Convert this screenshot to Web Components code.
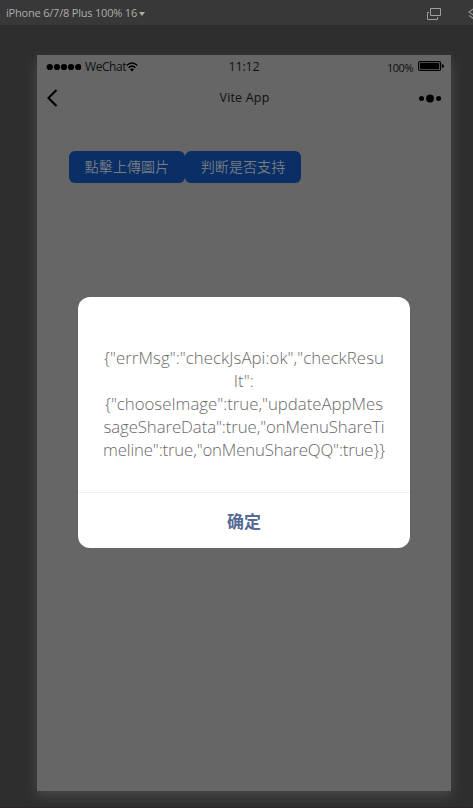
<!DOCTYPE html>
<html lang="zh"><head><meta charset="utf-8"><title>Vite App</title>
<style>html,body{margin:0;height:100%;overflow:hidden;background:#2e2e2e}body{font-family:"Open Sans","Noto Sans CJK SC",sans-serif}</style></head>
<body>
<sim-window>
<sim-toolbar slot="bar"><fit-text w="131">iPhone 6/7/8 Plus 100% 16</fit-text></sim-toolbar>
<phone-screen>
<status-bar></status-bar>
<nav-bar><fit-text w="50">Vite App</fit-text></nav-bar>
<button-row><app-button>點擊上傳圖片</app-button><app-button>判断是否支持</app-button></button-row>
</phone-screen>
<alert-dialog slot="overlay">
<fit-text w="280">{"errMsg":"checkJsApi:ok","checkResu</fit-text>
<fit-text w="20">lt":</fit-text>
<fit-text w="278">{"chooseImage":true,"updateAppMes</fit-text>
<fit-text w="281">sageShareData":true,"onMenuShareTi</fit-text>
<fit-text w="282">meline":true,"onMenuShareQQ":true}}</fit-text>
<span slot="action">确定</span>
</alert-dialog>
</sim-window>
<script>
const make=(name,html,ready)=>customElements.define(name,class extends HTMLElement{
  constructor(){super();this.attachShadow({mode:'open'}).innerHTML=html}
  connectedCallback(){if(ready)ready(this)}
});
make('sim-window',`<style>:host{display:flex;flex-direction:column;position:relative;height:808px;width:473px;box-sizing:border-box;border-bottom:1px solid #2d2529;background:#2e2e2e;overflow:hidden}</style><slot name="bar"></slot><slot></slot><slot name="overlay"></slot>`);
make('sim-toolbar',`<style>:host{display:flex;align-items:center;flex:none;height:25px;background:#383838;color:#adadad;font-size:11px;padding:1px 0 0 6px;box-sizing:border-box;position:relative;z-index:1}
fit-text,slot{display:block}slot{margin-top:-1px}.a{margin-left:2px;margin-top:1px}.b{margin-left:282px;margin-top:2px}.c{margin-left:27px;margin-top:2px;flex:none}svg{flex:none}</style>
<slot></slot><svg class="a" width="6" height="4"><path d="M0 0H6L3 4Z" fill="#adadad"/></svg>
<svg class="b" width="14" height="12" viewBox="0 0 14 12" fill="none" stroke="#9e9e9e"><path d="M3.500.5h10v7h-10zM2 4.500H.5v7h10V9"/></svg>
<svg class="c" width="14" height="14" viewBox="0 0 14 14" fill="none" stroke="#8f8f8f" stroke-width="1.300"><path d="M7 1 1 5l6 4 6-4zM1 8.500l6 4 6-4"/></svg>`);
make('phone-screen',`<style>:host{display:block;flex:none;width:414px;height:736px;margin:30px 0 0 37px;background:#666;box-shadow:0 5px 12px 0 #4b4b4b}</style><slot></slot>`);
make('status-bar',`<style>:host{display:grid;grid-template-columns:1fr auto 1fr;align-items:center;height:22px;margin-bottom:1px;padding:0 7px 0 9px;font-size:12px;color:#111}
.l,.r{display:flex;align-items:center}.r{justify-content:flex-end;font-size:11px}.l svg:first-child{margin-right:4px}.r svg{margin-left:5px}.l,.r{height:22px}.l svg{margin-top:1px}.r fit-text{margin-top:2px}.t{font-size:12.500px;margin-left:-2px}</style>
<div class="l"><svg width="35" height="8" fill="#000"><circle cx="3.800" cy="4" r="3.100"/><circle cx="10.900" cy="4" r="3.100"/><circle cx="18" cy="4" r="3.100"/><circle cx="25.100" cy="4" r="3.100"/><circle cx="32.200" cy="4" r="3.100"/></svg><fit-text w="41">WeChat</fit-text><svg width="12" height="10" viewBox="0 0 12 10" fill="none" stroke="#000" stroke-width="1.500"><path d="M.7 3.500Q6-1.500 11.300 3.500M2.700 5.700Q6 2.500 9.300 5.700"/><path d="M4 7.300Q6 5.500 8 7.300L6 9.500Z" fill="#000" stroke="none"/></svg></div>
<fit-text class="t" w="31">11:12</fit-text>
<div class="r"><fit-text w="26">100%</fit-text><svg width="26" height="10" viewBox="0 0 26 10"><rect x=".6" y=".6" width="22" height="8.800" rx="1.500" fill="none" stroke="#000" stroke-width="1.200"/><rect x="2" y="2" width="19.200" height="6" rx=".7"/><path d="M24 3Q26 3.500 26 5T24 7Z"/></svg></div>`);
make('nav-bar',`<style>:host{display:grid;grid-template-columns:1fr auto 1fr;align-items:center;height:40px;padding:0 9px 0 10px;font-size:12.500px;color:#111}
.m{justify-self:end}slot{display:block;margin-top:-1px}</style><svg width="11" height="18" fill="none" stroke="#000" stroke-width="2.100"><path d="M9.500 1 1.400 9l8.100 8"/></svg><slot></slot><svg class="m" width="24" height="10"><circle cx="3.500" cy="5.500" r="2.500"/><circle cx="12" cy="5.500" r="3.900"/><circle cx="20.600" cy="5.500" r="2.500"/></svg>`);
make('button-row',`<style>:host{display:flex;padding:33px 0 0 32px}</style><slot></slot>`);
make('app-button',`<style>:host{display:flex;align-items:center;justify-content:center;width:116px;height:32px;box-sizing:border-box;padding-bottom:2px;border-radius:6px;background:#092f66;color:#7a7d82;font:350 14px "Noto Sans CJK SC",sans-serif;box-shadow:0 2px 0 #636466;letter-spacing:.1px}</style><slot></slot>`);
make('alert-dialog',`<style>:host{display:flex;flex-direction:column;position:absolute;left:78px;top:297.400px;width:332px;height:251px;box-sizing:border-box;border-radius:12px;background:#fff;overflow:hidden}
.body{height:195px;flex:none;box-sizing:border-box;padding-top:49px;display:flex;flex-direction:column;align-items:center;font-size:16.800px;line-height:23px;font-weight:300;color:#686868}
.foot{flex:1;border-top:1px solid #efefef;display:flex;align-items:center;justify-content:center;color:#576b95;font:700 17px "Noto Sans CJK SC",sans-serif}</style>
<div class="body"><slot></slot></div><div class="foot"><slot name="action"></slot></div>`);
make('fit-text',`<style>:host{display:block;flex:none;white-space:nowrap}span{display:inline-block}</style><span><slot></slot></span>`,el=>{
  const s=el.shadowRoot.querySelector('span'),w=+el.getAttribute('w'),n=el.textContent.length;
  const gap=(w-s.getBoundingClientRect().width)/n;
  s.style.letterSpacing=gap+'px';
});
</script>
</body></html>
